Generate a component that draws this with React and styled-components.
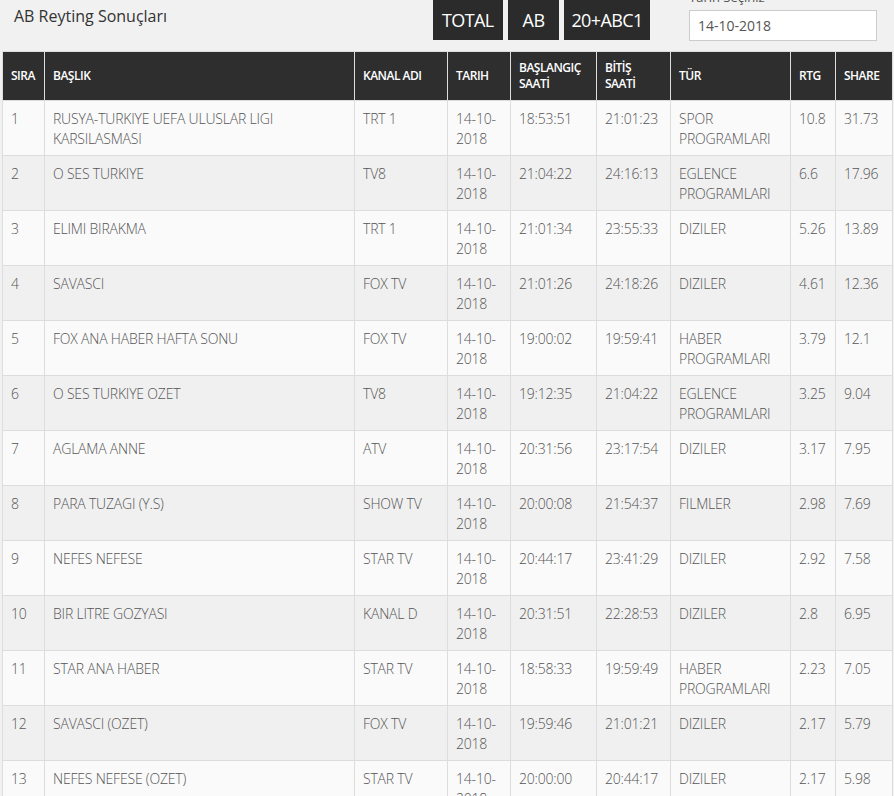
import React from 'react';
import styled, { createGlobalStyle } from 'styled-components';

const GlobalStyle = createGlobalStyle`
  html, body {
    margin: 0;
    padding: 0;
    background: #f1f1f1;
    font-family: "Open Sans", "Liberation Sans", sans-serif;
    color: #555;
  }
`;

const Page = styled.div`
  padding: 0 2px;
  overflow: hidden;
`;

const TopBar = styled.div`
  display: flex;
  align-items: flex-start;
  height: 51px;
`;

const Title = styled.h1`
  width: 419px;
  margin: 0;
  padding: 5px 0 0 12px;
  font-size: 16px;
  font-weight: 400;
  line-height: 22px;
  color: #333;
`;

const ButtonGroup = styled.div`
  display: flex;
  gap: 5px;
`;

const FilterButton = styled.button`
  height: 40px;
  padding: 0 ${p => p.$pad || 9}px;
  border: 0;
  border-radius: 0;
  background: #2b2b2b;
  color: #fff;
  font-family: inherit;
  font-size: 18px;
  font-weight: 400;
  letter-spacing: -0.6px;
`;

const DateGroup = styled.div`
  display: flex;
  flex-direction: column;
  width: 188px;
  margin-left: auto;
  margin-right: 15px;
  margin-top: -12px;
`;

const DateLabel = styled.label`
  font-size: 13px;
  line-height: 18px;
  color: #555;
  margin-bottom: 4px;
`;

const DateInput = styled.input`
  box-sizing: border-box;
  height: 31px;
  width: 100%;
  padding: 0 8px;
  border: 1px solid #ccc;
  background: #fff;
  font-family: inherit;
  font-size: 14px;
  color: #555;
  outline: none;
`;

const Table = styled.table`
  width: 890px;
  table-layout: fixed;
  border-collapse: collapse;
  border: 1px solid #ddd;
`;

const HeadCell = styled.th`
  width: ${p => p.$w}px;
  box-sizing: border-box;
  height: 48px;
  padding: 8px 8px;
  background: #2e2e2e;
  border: 1px solid #ddd;
  border-top: 0;
  border-bottom: 0;
  color: #fff;
  font-size: 12px;
  font-weight: 600;
  letter-spacing: -0.5px;
  line-height: 16px;
  text-align: left;
  vertical-align: middle;
`;

const Row = styled.tr`
  background: ${p => (p.$odd ? '#fafafa' : '#f0f0f0')};
`;

const Cell = styled.td`
  height: 40px;
  padding: 8px 8px 6px;
  border: 1px solid #ddd;
  font-size: 14px;
  font-weight: 300;
  line-height: 20px;
  color: #555;
  vertical-align: top;
  letter-spacing: -0.2px;
`;

const columns = [
  { key: 'sira', label: 'SIRA', w: 42 },
  { key: 'baslik', label: 'BAŞLIK', w: 310 },
  { key: 'kanal', label: 'KANAL ADI', w: 93 },
  { key: 'tarih', label: 'TARIH', w: 63 },
  { key: 'bas', label: 'BAŞLANGIÇ SAATİ', w: 86 },
  { key: 'bit', label: 'BİTİŞ SAATİ', w: 74 },
  { key: 'tur', label: 'TÜR', w: 120 },
  { key: 'rtg', label: 'RTG', w: 45 },
  { key: 'share', label: 'SHARE', w: 57 },
];

const rows = [
  ['1', 'RUSYA-TURKIYE UEFA ULUSLAR LIGI KARSILASMASI', 'TRT 1', '18:53:51', '21:01:23', 'SPOR PROGRAMLARI', '10.8', '31.73'],
  ['2', 'O SES TURKIYE', 'TV8', '21:04:22', '24:16:13', 'EGLENCE PROGRAMLARI', '6.6', '17.96'],
  ['3', 'ELIMI BIRAKMA', 'TRT 1', '21:01:34', '23:55:33', 'DIZILER', '5.26', '13.89'],
  ['4', 'SAVASCI', 'FOX TV', '21:01:26', '24:18:26', 'DIZILER', '4.61', '12.36'],
  ['5', 'FOX ANA HABER HAFTA SONU', 'FOX TV', '19:00:02', '19:59:41', 'HABER PROGRAMLARI', '3.79', '12.1'],
  ['6', 'O SES TURKIYE OZET', 'TV8', '19:12:35', '21:04:22', 'EGLENCE PROGRAMLARI', '3.25', '9.04'],
  ['7', 'AGLAMA ANNE', 'ATV', '20:31:56', '23:17:54', 'DIZILER', '3.17', '7.95'],
  ['8', 'PARA TUZAGI (Y.S)', 'SHOW TV', '20:00:08', '21:54:37', 'FILMLER', '2.98', '7.69'],
  ['9', 'NEFES NEFESE', 'STAR TV', '20:44:17', '23:41:29', 'DIZILER', '2.92', '7.58'],
  ['10', 'BIR LITRE GOZYASI', 'KANAL D', '20:31:51', '22:28:53', 'DIZILER', '2.8', '6.95'],
  ['11', 'STAR ANA HABER', 'STAR TV', '18:58:33', '19:59:49', 'HABER PROGRAMLARI', '2.23', '7.05'],
  ['12', 'SAVASCI (OZET)', 'FOX TV', '19:59:46', '21:01:21', 'DIZILER', '2.17', '5.79'],
  ['13', 'NEFES NEFESE (OZET)', 'STAR TV', '20:00:00', '20:44:17', 'DIZILER', '2.17', '5.98'],
];

export default function App() {
  return (
    <>
      <GlobalStyle />
      <Page>
        <TopBar>
          <Title>AB Reyting Sonuçları</Title>
          <ButtonGroup>
            <FilterButton>TOTAL</FilterButton>
            <FilterButton $pad={15}>AB</FilterButton>
            <FilterButton $pad={7}>20+ABC1</FilterButton>
          </ButtonGroup>
          <DateGroup>
            <DateLabel>Tarih Seçiniz</DateLabel>
            <DateInput defaultValue="14-10-2018" />
          </DateGroup>
        </TopBar>
        <Table>
          <thead>
            <tr>
              {columns.map(c => (
                <HeadCell key={c.key} $w={c.w}>{c.label}</HeadCell>
              ))}
            </tr>
          </thead>
          <tbody>
            {rows.map((r, i) => (
              <Row key={r[0]} $odd={i % 2 === 0}>
                <Cell>{r[0]}</Cell>
                <Cell>{r[1]}</Cell>
                <Cell>{r[2]}</Cell>
                <Cell>14-10-2018</Cell>
                <Cell>{r[3]}</Cell>
                <Cell>{r[4]}</Cell>
                <Cell>{r[5]}</Cell>
                <Cell>{r[6]}</Cell>
                <Cell>{r[7]}</Cell>
              </Row>
            ))}
          </tbody>
        </Table>
      </Page>
    </>
  );
}
